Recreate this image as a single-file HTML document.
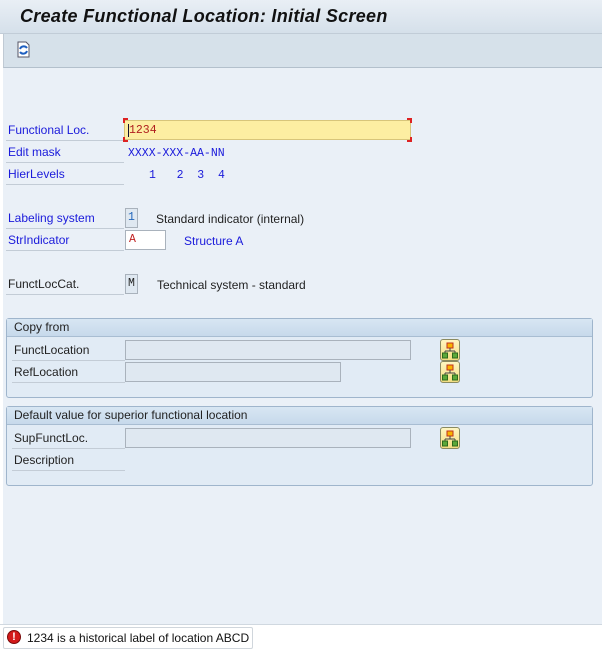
<!DOCTYPE html>
<html><head><meta charset="utf-8"><style>
*{margin:0;padding:0;box-sizing:border-box}
body{width:602px;height:651px;background:#fff;font-family:"Liberation Sans",Tahoma,sans-serif;font-size:12px;position:relative;overflow:hidden}
.a{position:absolute;white-space:nowrap}
.lbl{position:absolute;height:20px;line-height:19px;border-bottom:1px solid #c3ccd6;color:#1a1adb;padding-left:2px}
.blk{color:#222}
.mono{font-family:"Liberation Mono",monospace;font-size:11.5px}
.inp{position:absolute;height:20px;border:1px solid #a9b2bc;background:#dfe8f1}
.grp{position:absolute;left:6px;width:587px;border:1px solid #9fb5cc;background:#e1ebf5;border-radius:3px}
.gh{height:18px;background:linear-gradient(#d8e6f3,#c7d9eb);border-bottom:1px solid #a8bdd2;padding-left:7px;line-height:17px;color:#222}
.hb{position:absolute;width:20px;height:22px;border:1px solid #8a8a60;border-radius:3px;background:linear-gradient(#fff6c0,#f2dd82)}
</style></head><body>
<div class="a" style="left:0;top:0;width:602px;height:34px;background:linear-gradient(#e9eff5,#d5e0ea);border-bottom:1px solid #c1ccd7"></div>
<div class="a" style="left:20px;top:6px;font-size:18px;letter-spacing:0.3px;font-weight:bold;font-style:italic;color:#111">Create Functional Location: Initial Screen</div>
<div class="a" style="left:3px;top:34px;width:599px;height:34px;background:#d6e1ea;border-bottom:1px solid #b3c0cc;border-left:1px solid #c0cad4"></div>
<svg class="a" style="left:15px;top:41px" width="17" height="17" viewBox="0 0 17 17"><path d="M3 1h8l3 3v12H3z" fill="#fff" stroke="#556" /><path d="M5 8a4 4 0 0 1 7-1" stroke="#1e5fc0" stroke-width="2" fill="none"/><path d="M12 10a4 4 0 0 1-7 1" stroke="#1e5fc0" stroke-width="2" fill="none"/></svg>
<div class="a" style="left:3px;top:68px;width:599px;height:556px;background:#eaf0f7"></div>

<div class="lbl" style="left:6px;top:121px;width:118px">Functional Loc.</div>
<div class="a" style="left:124px;top:120px;width:287px;height:20px;background:#fdeea2;border:1px solid #d8c57a"></div>
<div class="a" style="left:123px;top:118px;width:5px;height:5px;border-left:2px solid #d22;border-top:2px solid #d22"></div>
<div class="a" style="left:407px;top:118px;width:5px;height:5px;border-right:2px solid #d22;border-top:2px solid #d22"></div>
<div class="a" style="left:123px;top:137px;width:5px;height:5px;border-left:2px solid #d22;border-bottom:2px solid #d22"></div>
<div class="a" style="left:407px;top:137px;width:5px;height:5px;border-right:2px solid #d22;border-bottom:2px solid #d22"></div>
<div class="a mono" style="left:128px;top:124px;color:#b02020;border-left:1px solid #113">1234</div>
<div class="lbl" style="left:6px;top:143px;width:118px">Edit mask</div>
<div class="a mono" style="left:128px;top:147px;color:#1a1adb">XXXX-XXX-AA-NN</div>
<div class="lbl" style="left:6px;top:165px;width:118px">HierLevels</div>
<div class="a mono" style="left:149px;top:169px;color:#1a1adb">1&nbsp;&nbsp;&nbsp;2&nbsp;&nbsp;3&nbsp;&nbsp;4</div>

<div class="lbl" style="left:6px;top:209px;width:118px">Labeling system</div>
<div class="a mono" style="left:125px;top:208px;width:13px;height:20px;border:1px solid #a9b2bc;background:#dfe8f1;color:#2266bb;text-align:center;line-height:18px">1</div>
<div class="a blk" style="left:156px;top:212px">Standard indicator (internal)</div>
<div class="lbl" style="left:6px;top:231px;width:118px">StrIndicator</div>
<div class="a mono" style="left:125px;top:230px;width:41px;height:20px;border:1px solid #a9b2bc;background:#fff;color:#c02020;line-height:18px;padding-left:3px">A</div>
<div class="a" style="left:184px;top:234px;color:#1a1adb">Structure A</div>
<div class="lbl blk" style="left:6px;top:275px;width:118px">FunctLocCat.</div>
<div class="a mono" style="left:125px;top:274px;width:13px;height:20px;border:1px solid #a9b2bc;background:#dfe8f1;color:#222;text-align:center;line-height:18px">M</div>
<div class="a blk" style="left:157px;top:278px">Technical system - standard</div>

<div class="grp" style="top:318px;height:80px"><div class="gh">Copy from</div></div>
<div class="lbl blk" style="left:12px;top:341px;width:113px">FunctLocation</div>
<div class="inp" style="left:125px;top:340px;width:286px"></div>
<div class="lbl blk" style="left:12px;top:363px;width:113px">RefLocation</div>
<div class="inp" style="left:125px;top:362px;width:216px"></div>

<div class="grp" style="top:406px;height:80px"><div class="gh">Default value for superior functional location</div></div>
<div class="lbl blk" style="left:12px;top:429px;width:113px">SupFunctLoc.</div>
<div class="inp" style="left:125px;top:428px;width:286px"></div>
<div class="lbl blk" style="left:12px;top:451px;width:113px">Description</div>

<div class="hb" style="left:440px;top:339px"></div>
<div class="hb" style="left:440px;top:361px"></div>
<div class="hb" style="left:440px;top:427px"></div>
<svg class="a" style="left:440px;top:339px" width="20" height="110" viewBox="0 0 20 110">
<g id="t"><rect x="7" y="4" width="6" height="5" fill="#f7b400" stroke="#c03020"/><path d="M10 9v3M5 12h10M5 12v2M15 12v2" stroke="#444" fill="none"/><rect x="2.5" y="14" width="5" height="5" fill="#5aa83a" stroke="#2c6a1c"/><rect x="12.5" y="14" width="5" height="5" fill="#5aa83a" stroke="#2c6a1c"/></g>
<use href="#t" y="22"/><use href="#t" y="88"/></svg>

<div class="a" style="left:0;top:624px;width:602px;height:27px;background:#fff;border-top:1px solid #d0d8e0"></div>
<div class="a" style="left:3px;top:627px;width:250px;height:22px;border:1px solid #d0d6dc;border-radius:2px;background:#fff"></div>
<div class="a" style="left:7px;top:630px;width:14px;height:14px;border-radius:50%;background:#d41a1a;border:1px solid #7a0a0a;color:#fff;font-weight:bold;font-size:11px;text-align:center;line-height:13px">!</div>
<div class="a" style="left:27px;top:631px;color:#111">1234 is a historical label of location ABCD</div>
</body></html>
